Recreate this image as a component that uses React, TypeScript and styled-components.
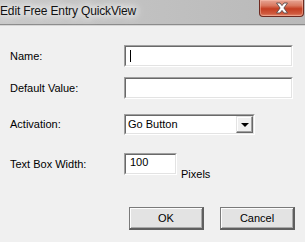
import React from "react";
import styled, { createGlobalStyle } from "styled-components";

const Global = createGlobalStyle`
  html, body { margin: 0; padding: 0; background: #f0f0f0; overflow: hidden; }
  * { box-sizing: border-box; }
`;

const Window = styled.div`
  width: 305px;
  height: 242px;
  display: flex;
  flex-direction: column;
  background: #f0f0f0;
  font-family: "Liberation Sans", Arial, sans-serif;
  font-size: 11px;
  color: #000;
`;

const TitleBar = styled.div`
  height: 25px;
  flex: none;
  display: flex;
  align-items: flex-start;
  justify-content: space-between;
  background: linear-gradient(to right, #c9c9c9 0%, #c2c2c2 40%, #b9b9b9 100%);
  border-bottom: 1px solid #8c8c8c;
  box-shadow: 0 1px 0 #d6d6d6;
`;

const Title = styled.div`
  font-size: 12px;
  line-height: 14px;
  padding-top: 4px;
  padding-left: 0;
  letter-spacing: -0.15px;
  color: #111;
  text-shadow: 0 0 6px #fff, 0 0 10px #fff, 0 0 14px #f4f4f4;
`;

const CloseButton = styled.div`
  width: 45px;
  height: 17px;
  margin-right: 1px;
  border: 1px solid #6e2a20;
  border-top: none;
  border-radius: 0 0 4px 4px;
  background: linear-gradient(to bottom, #e6a595 0%, #d9785f 35%, #c43e22 55%, #cf5a3e 85%, #e08a70 100%);
  box-shadow: inset 0 0 0 1px rgba(255, 200, 180, 0.45);
  display: flex;
  align-items: center;
  justify-content: center;
`;

const Body = styled.div`
  flex: 1;
  display: flex;
  flex-direction: column;
  padding: 20px 10px 0 10px;
`;

const Row = styled.div<{ $top: number }>`
  display: flex;
  align-items: center;
  margin-top: ${(p) => p.$top}px;
`;

const Label = styled.div`
  width: 114px;
  flex: none;
  line-height: 13px;
`;

const Sunken = styled.div<{ $w: number; $h: number }>`
  width: ${(p) => p.$w}px;
  height: ${(p) => p.$h}px;
  background: #fff;
  border-top: 1px solid #a0a0a0;
  border-left: 1px solid #a0a0a0;
  border-bottom: 1px solid #fff;
  border-right: 1px solid #fff;
  display: flex;
  align-items: stretch;
`;

const SunkenInner = styled.div`
  flex: 1;
  display: flex;
  align-items: center;
  border-top: 1px solid #696969;
  border-left: 1px solid #696969;
  border-bottom: 1px solid #e3e3e3;
  border-right: 1px solid #e3e3e3;
  padding-left: 4px;
  min-width: 0;
`;

const Caret = styled.span`
  width: 1px;
  height: 12px;
  background: #000;
  margin-left: 0;
`;

const Value = styled.span`
  line-height: 13px;
  padding-bottom: 4px;
`;

const SelectText = styled.span`
  flex: 1;
  line-height: 13px;
  margin-left: -2px;
`;

const DropButton = styled.div`
  width: 17px;
  align-self: stretch;
  background: #f0f0f0;
  border-top: 1px solid #e3e3e3;
  border-left: 1px solid #e3e3e3;
  border-bottom: 1px solid #696969;
  border-right: 1px solid #696969;
  box-shadow: inset -1px -1px 0 #a0a0a0, inset 1px 1px 0 #fff;
  display: flex;
  align-items: center;
  justify-content: center;
`;

const Arrow = styled.span`
  width: 0;
  height: 0;
  border-left: 4px solid transparent;
  border-right: 4px solid transparent;
  border-top: 4px solid #000;
  margin-top: 1px;
`;

const Unit = styled.div`
  align-self: flex-end;
  margin-left: 4px;
  line-height: 13px;
  margin-bottom: -6px;
`;

const ButtonBar = styled.div`
  display: flex;
  justify-content: flex-end;
  gap: 16px;
  margin-top: 32px;
`;

const Button = styled.div`
  width: 75px;
  height: 23px;
  display: flex;
  align-items: center;
  justify-content: center;
  background: #e3e3e3;
  border-top: 1px solid #7a7a7a;
  border-left: 1px solid #7a7a7a;
  border-bottom: 2px solid #5f5f5f;
  border-right: 2px solid #5f5f5f;
  box-shadow: inset 1px 1px 0 #fdfdfd, inset -1px -1px 0 #a8a8a8;
  line-height: 13px;
  padding-top: 1px;
`;

const CloseIcon = () => (
  <svg width="16" height="12" viewBox="0 0 16 12">
    <path
      d="M2.5 1 H6 L8 3.6 L10 1 H13.5 L9.9 6 L13.5 11 H10 L8 8.4 L6 11 H2.5 L6.1 6 Z"
      fill="#ffffff"
      stroke="#5a4a48"
      strokeWidth="0.9"
      strokeLinejoin="round"
    />
  </svg>
);

export default function App() {
  return (
    <>
      <Global />
      <Window>
        <TitleBar>
          <Title>Edit Free Entry QuickView</Title>
          <CloseButton>
            <CloseIcon />
          </CloseButton>
        </TitleBar>
        <Body>
          <Row $top={0}>
            <Label>Name:</Label>
            <Sunken $w={169} $h={22}>
              <SunkenInner>
                <Caret />
              </SunkenInner>
            </Sunken>
          </Row>
          <Row $top={10}>
            <Label>Default Value:</Label>
            <Sunken $w={169} $h={22}>
              <SunkenInner />
            </Sunken>
          </Row>
          <Row $top={15}>
            <Label>Activation:</Label>
            <Sunken $w={131} $h={21}>
              <SunkenInner>
                <SelectText>Go Button</SelectText>
                <DropButton>
                  <Arrow />
                </DropButton>
              </SunkenInner>
            </Sunken>
          </Row>
          <Row $top={18}>
            <Label>Text Box Width:</Label>
            <Sunken $w={53} $h={22}>
              <SunkenInner>
                <Value>100</Value>
              </SunkenInner>
            </Sunken>
            <Unit>Pixels</Unit>
          </Row>
          <ButtonBar>
            <Button>OK</Button>
            <Button>Cancel</Button>
          </ButtonBar>
        </Body>
      </Window>
    </>
  );
}
